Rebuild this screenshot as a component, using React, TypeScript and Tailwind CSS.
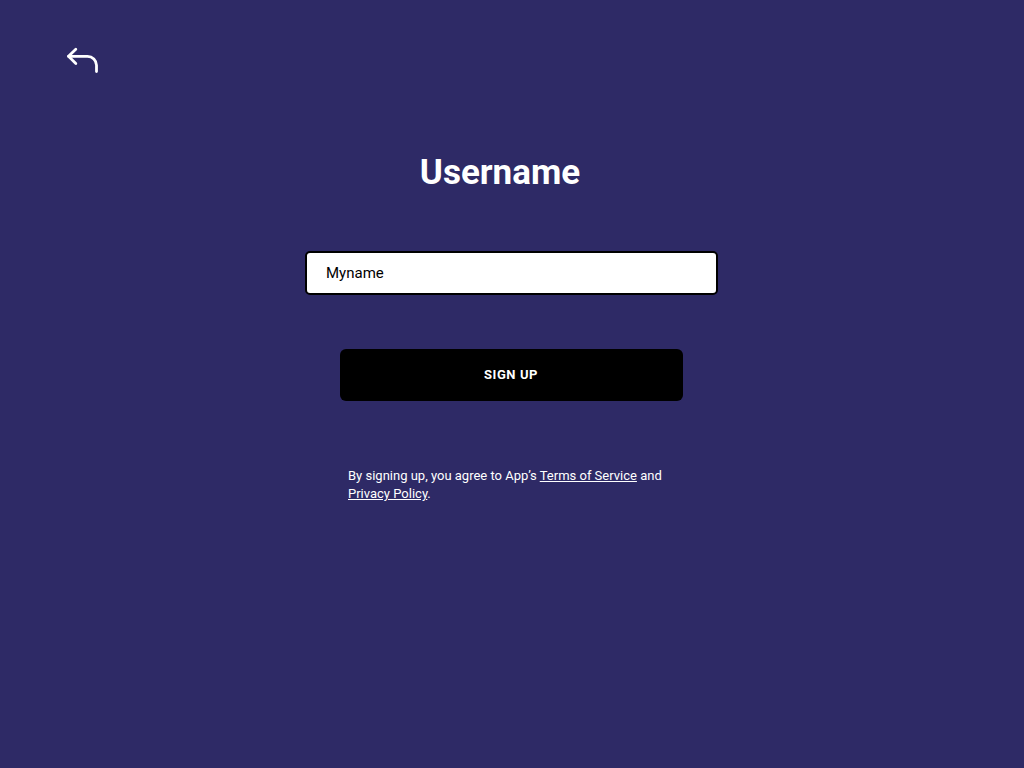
import React from "react";

const BackIcon = () => (
  <svg width="44" height="40" viewBox="0 0 44 40" fill="none" stroke="#ffffff" strokeWidth="2.8" strokeLinecap="round" strokeLinejoin="round">
    <path d="M15.8 9.2 L8.5 16.3 L15.8 23.4" />
    <path d="M8.5 16.3 H27.5 A9 9 0 0 1 36.5 25.3 V31.5" />
  </svg>
);

const App = () => {
  return (
    <div className="min-h-screen w-full bg-[#2e2a66] font-['Roboto','Liberation_Sans',sans-serif] text-white">
      <div className="pt-[40px] pl-[60px] h-[80px]">
        <button className="block">
          <BackIcon />
        </button>
      </div>
      <div className="flex flex-col items-center">
        <h1 className="mt-[73px] text-[35px] leading-[40px] font-bold mr-[24px]">Username</h1>
        <input
          className="mt-[58px] w-[413px] h-[44px] bg-white border-2 border-black rounded-[5px] pl-[19px] text-[15px] text-black outline-none mr-[1px]"
          defaultValue="Myname"
        />
        <button className="mt-[54px] w-[343px] h-[52px] bg-black rounded-[6px] text-[13px] font-bold tracking-[0.6px] text-white mr-[2px]">
          SIGN UP
        </button>
        <p className="mt-[66px] w-[330px] ml-[2px] text-[13px] leading-[18px] text-left">
          By signing up, you agree to App’s <a className="underline" href="#">Terms of Service</a> and{" "}
          <a className="underline" href="#">Privacy Policy</a>.
        </p>
      </div>
    </div>
  );
};

export default App;
